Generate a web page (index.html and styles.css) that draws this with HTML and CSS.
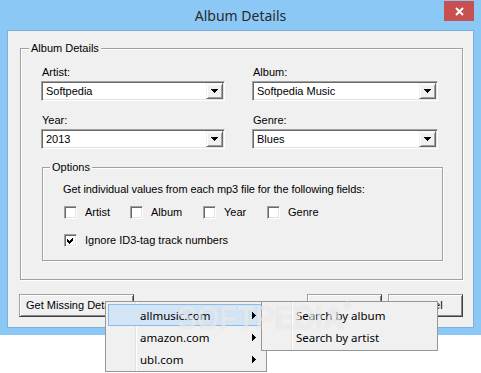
FILE: index.html
```html
<!DOCTYPE html>
<html>
<head>
<meta charset="utf-8">
<link rel="stylesheet" href="styles.css">
</head>
<body>
<div class="window">
  <div class="titlebar">
    <span class="spacer"></span>
    <span class="title">Album Details</span>
    <span class="close"><svg width="30" height="20" viewBox="0 0 30 20"><path d="M12 7 L19 14 M19 7 L12 14" stroke="#fff" stroke-width="2" fill="none"/></svg></span>
  </div>
  <div class="client">
    <div class="group outer">
      <div class="legend">Album Details</div>
      <div class="fields">
        <div class="field">
          <div class="label">Artist:</div>
          <div class="combo"><span class="value">Softpedia</span><span class="drop"><svg width="7" height="4" shape-rendering="crispEdges"><rect x="0" y="0" width="7" height="1"/><rect x="1" y="1" width="5" height="1"/><rect x="2" y="2" width="3" height="1"/><rect x="3" y="3" width="1" height="1"/></svg></span></div>
        </div>
        <div class="field">
          <div class="label">Album:</div>
          <div class="combo"><span class="value">Softpedia Music</span><span class="drop"><svg width="7" height="4" shape-rendering="crispEdges"><rect x="0" y="0" width="7" height="1"/><rect x="1" y="1" width="5" height="1"/><rect x="2" y="2" width="3" height="1"/><rect x="3" y="3" width="1" height="1"/></svg></span></div>
        </div>
        <div class="field">
          <div class="label">Year:</div>
          <div class="combo"><span class="value">2013</span><span class="drop"><svg width="7" height="4" shape-rendering="crispEdges"><rect x="0" y="0" width="7" height="1"/><rect x="1" y="1" width="5" height="1"/><rect x="2" y="2" width="3" height="1"/><rect x="3" y="3" width="1" height="1"/></svg></span></div>
        </div>
        <div class="field">
          <div class="label">Genre:</div>
          <div class="combo"><span class="value">Blues</span><span class="drop"><svg width="7" height="4" shape-rendering="crispEdges"><rect x="0" y="0" width="7" height="1"/><rect x="1" y="1" width="5" height="1"/><rect x="2" y="2" width="3" height="1"/><rect x="3" y="3" width="1" height="1"/></svg></span></div>
        </div>
      </div>
      <div class="group options">
        <div class="legend">Options</div>
        <div class="desc">Get individual values from each mp3 file for the following fields:</div>
        <div class="checks">
          <div class="check"><span class="box"></span><span>Artist</span></div>
          <div class="check"><span class="box"></span><span>Album</span></div>
          <div class="check"><span class="box"></span><span>Year</span></div>
          <div class="check"><span class="box"></span><span>Genre</span></div>
        </div>
        <div class="check ignore"><span class="box"><svg width="9" height="9" viewBox="0 0 9 9" shape-rendering="crispEdges"><path d="M1 3 L3 5 L7 1 L7 4 L3 8 L1 6 Z" fill="#000"/></svg></span><span>Ignore ID3-tag track numbers</span></div>
      </div>
    </div>
    <div class="buttons">
      <div class="btn missing">Get Missing Details</div>
      <div class="right">
        <div class="btn">OK</div>
        <div class="btn">Cancel</div>
      </div>
    </div>
  </div>
</div>

<div class="menu main">
  <div class="item hl"><span>allmusic.com</span><svg class="arr" width="4" height="7" shape-rendering="crispEdges"><rect x="0" y="0" width="1" height="7"/><rect x="1" y="1" width="1" height="5"/><rect x="2" y="2" width="1" height="3"/><rect x="3" y="3" width="1" height="1"/></svg></div>
  <div class="item"><span>amazon.com</span><svg class="arr" width="4" height="7" shape-rendering="crispEdges"><rect x="0" y="0" width="1" height="7"/><rect x="1" y="1" width="1" height="5"/><rect x="2" y="2" width="1" height="3"/><rect x="3" y="3" width="1" height="1"/></svg></div>
  <div class="item"><span>ubl.com</span><svg class="arr" width="4" height="7" shape-rendering="crispEdges"><rect x="0" y="0" width="1" height="7"/><rect x="1" y="1" width="1" height="5"/><rect x="2" y="2" width="1" height="3"/><rect x="3" y="3" width="1" height="1"/></svg></div>
</div>
<div class="menu sub">
  <div class="item"><span>Search by album</span></div>
  <div class="item"><span>Search by artist</span></div>
</div>
<div class="watermark">SOFTPEDIA<sup>®</sup></div>
</body>
</html>
```
FILE: styles.css
```css
html, body {
  margin: 0;
  padding: 0;
  background: #fff;
}
body {
  width: 481px;
  height: 373px;
  overflow: hidden;
  position: relative;
  font-family: "Liberation Sans", Arial, sans-serif;
  font-size: 11px;
  color: #000;
}
.window {
  width: 481px;
  height: 335px;
  box-sizing: border-box;
  padding: 0 7px;
  background: #8cc8f5;
  display: flex;
  flex-direction: column;
}
.titlebar {
  height: 30px;
  display: grid;
  grid-template-columns: 1fr auto 1fr;
}
.title {
  font-family: "Noto Sans", sans-serif;
  font-size: 14px;
  line-height: 31px;
  color: #2a2a2a;
}
.close {
  justify-self: end;
  width: 30px;
  height: 20px;
  margin-top: 1px;
  background: #c75050;
  display: block;
}
.close svg { display: block; }
.client {
  height: 298px;
  box-sizing: border-box;
  border: 1px solid #7db0de;
  background: #f0f0f0;
}
.group {
  box-sizing: border-box;
  border: 1px solid #a0a0a0;
  box-shadow: inset 1px 1px 0 #fff, 1px 1px 0 #fff;
}
.legend {
  width: max-content;
  height: 13px;
  line-height: 13px;
  margin: -7px 0 0 8px;
  padding: 0 2px;
  background: #f0f0f0;
}
.outer {
  width: 443px;
  height: 232px;
  margin: 17px 0 0 12px;
}
.fields {
  display: grid;
  grid-template-columns: 184px 186px;
  column-gap: 27px;
  row-gap: 13px;
  margin: 11px 0 0 20px;
}
.label {
  height: 13px;
  line-height: 13px;
  padding-left: 1px;
  margin-bottom: 2px;
}
.combo {
  height: 20px;
  box-sizing: border-box;
  padding: 1px;
  border: 1px solid;
  border-color: #a0a0a0 #fff #fff #a0a0a0;
  box-shadow: inset 1px 1px 0 #696969, inset -1px -1px 0 #e3e3e3;
  background: #fff;
  display: flex;
  align-items: center;
}
.value {
  flex: 1;
  padding-left: 3px;
  line-height: 16px;
}
.drop {
  width: 17px;
  height: 16px;
  box-sizing: border-box;
  background: #f0f0f0;
  border: 1px solid;
  border-color: #f0f0f0 #696969 #696969 #f0f0f0;
  box-shadow: inset 1px 1px 0 #fff, inset -1px -1px 0 #a0a0a0;
  display: flex;
  align-items: center;
  justify-content: center;
}
.drop svg { display: block; fill: #000; }
.options {
  width: 401px;
  height: 94px;
  margin: 18px 0 0 21px;
}
.options .legend { margin-left: 7px; }
.desc {
  margin: 9px 0 0 20px;
  line-height: 13px;
  letter-spacing: -0.08px;
}
.checks {
  display: grid;
  grid-template-columns: 66px 73px 64px auto;
  margin: 10px 0 0 21px;
}
.check {
  display: flex;
  align-items: center;
  gap: 8px;
  height: 13px;
  line-height: 13px;
}
.ignore { margin: 15px 0 0 21px; }
.box {
  width: 13px;
  height: 13px;
  box-sizing: border-box;
  border: 1px solid;
  border-color: #a0a0a0 #fff #fff #a0a0a0;
  box-shadow: inset 1px 1px 0 #696969, inset -1px -1px 0 #e3e3e3;
  background: #fff;
  padding: 1px;
  display: block;
}
.box svg { display: block; }
.buttons {
  display: flex;
  justify-content: space-between;
  margin: 14px 10px 0 11px;
}
.right {
  display: flex;
  gap: 6px;
}
.btn {
  width: 75px;
  height: 23px;
  box-sizing: border-box;
  border: 1px solid;
  border-color: #a0a0a0 #404040 #404040 #a0a0a0;
  box-shadow: inset 1px 1px 0 #fff, inset -1px -1px 0 #888;
  background: #f0f0f0;
  line-height: 21px;
  text-align: center;
}
.btn.missing {
  width: 115px;
  text-align: left;
  padding-left: 6px;
}
.menu {
  position: absolute;
  box-sizing: border-box;
  border: 1px solid #979797;
  padding: 2px;
  background: linear-gradient(to right, transparent 29px, #e2e3e3 29px, #e2e3e3 30px, #fff 30px, #fff 31px, transparent 31px), #f0f0f0;
  font-family: "Noto Sans", sans-serif;
  font-size: 11.5px;
  color: #000;
}
.main {
  left: 105px;
  top: 301px;
  width: 162px;
  height: 71px;
  padding-right: 3px;
}
.sub {
  left: 261px;
  top: 301px;
  width: 177px;
  height: 50px;
}
.item {
  height: 22px;
  box-sizing: border-box;
  border: 1px solid transparent;
  padding-left: 31px;
  display: flex;
  align-items: center;
}
.item.hl {
  background: #d3e4f5;
  border-color: #8cbbe9;
}
.arr {
  margin-left: auto;
  margin-right: 6px;
  display: block;
  fill: #000;
}
.watermark {
  position: absolute;
  left: 177px;
  top: 300px;
  font-family: "Liberation Sans", Arial, sans-serif;
  font-weight: bold;
  font-size: 34px;
  line-height: 34px;
  color: rgba(255, 255, 255, 0.6);
  text-shadow: 0 0 1px rgba(0, 0, 0, 0.14);
  transform: scaleX(0.86);
  transform-origin: left top;
  pointer-events: none;
}
.watermark sup {
  font-size: 10px;
  vertical-align: top;
  line-height: 12px;
}
```
